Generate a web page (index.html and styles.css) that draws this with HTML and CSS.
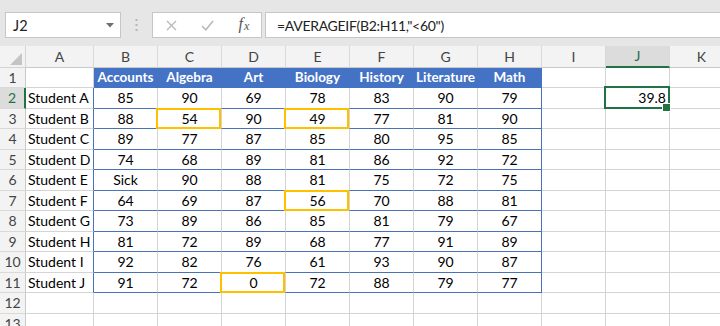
FILE: index.html
```html
<!DOCTYPE html>
<html>
<head>
<meta charset="utf-8">
<link rel="stylesheet" href="styles.css">
</head>
<body>
<div class="toolbar">
  <div class="namebox"><span>J2</span><svg class="caret" width="8" height="5" viewBox="0 0 8 5"><polygon points="0,0 8,0 4,4.5" fill="#6f6f6f"/></svg></div>
  <div class="grip"><svg width="3" height="12" viewBox="0 0 3 12"><rect x="0.5" y="0" width="2" height="2" fill="#b4b4b4"/><rect x="0.5" y="5" width="2" height="2" fill="#b4b4b4"/><rect x="0.5" y="10" width="2" height="2" fill="#b4b4b4"/></svg></div>
  <div class="fxbox">
    <span class="btn"><svg width="11" height="11" viewBox="0 0 11 11"><path d="M1 1 L10 10 M10 1 L1 10" stroke="#b9b9b9" stroke-width="1.3" fill="none"/></svg></span>
    <span class="btn"><svg width="13" height="11" viewBox="0 0 13 11"><path d="M1 6 L4.8 9.8 L12 1" stroke="#b9b9b9" stroke-width="1.6" fill="none"/></svg></span>
    <span class="btn fx">f<span class="sx">x</span></span>
  </div>
  <div class="formula">=AVERAGEIF(B2:H11,"&lt;60")</div>
</div>
<div class="sheet">
  <div class="corner"><svg width="14" height="14" viewBox="0 0 14 14"><polygon points="13,1 13,13 1,13" fill="#c4c4c4"/></svg></div>
  <div class="ch">A</div><div class="ch">B</div><div class="ch">C</div><div class="ch">D</div><div class="ch">E</div><div class="ch">F</div><div class="ch">G</div><div class="ch">H</div><div class="ch">I</div><div class="ch sel">J</div><div class="ch">K</div>

  <div class="rh">1</div><div class="c"></div><div class="c th">Accounts</div><div class="c th">Algebra</div><div class="c th">Art</div><div class="c th">Biology</div><div class="c th">History</div><div class="c th">Literature</div><div class="c th">Math</div><div class="c"></div><div class="c"></div><div class="c"></div>

  <div class="rh sel">2</div><div class="c nm tl">Student A</div><div class="c n tb">85</div><div class="c n tb">90</div><div class="c n tb">69</div><div class="c n tb">78</div><div class="c n tb">83</div><div class="c n tb">90</div><div class="c n tb tr">79</div><div class="c"></div><div class="c r act">39.8</div><div class="c"></div>

  <div class="rh">3</div><div class="c nm tl">Student B</div><div class="c n tb">88</div><div class="c n tb hl">54</div><div class="c n tb">90</div><div class="c n tb hl">49</div><div class="c n tb">77</div><div class="c n tb">81</div><div class="c n tb tr">90</div><div class="c"></div><div class="c"></div><div class="c"></div>

  <div class="rh">4</div><div class="c nm tl">Student C</div><div class="c n tb">89</div><div class="c n tb">77</div><div class="c n tb">87</div><div class="c n tb">85</div><div class="c n tb">80</div><div class="c n tb">95</div><div class="c n tb tr">85</div><div class="c"></div><div class="c"></div><div class="c"></div>

  <div class="rh">5</div><div class="c nm tl">Student D</div><div class="c n tb">74</div><div class="c n tb">68</div><div class="c n tb">89</div><div class="c n tb">81</div><div class="c n tb">86</div><div class="c n tb">92</div><div class="c n tb tr">72</div><div class="c"></div><div class="c"></div><div class="c"></div>

  <div class="rh">6</div><div class="c nm tl">Student E</div><div class="c n tb">Sick</div><div class="c n tb">90</div><div class="c n tb">88</div><div class="c n tb">81</div><div class="c n tb">75</div><div class="c n tb">72</div><div class="c n tb tr">75</div><div class="c"></div><div class="c"></div><div class="c"></div>

  <div class="rh">7</div><div class="c nm tl">Student F</div><div class="c n tb">64</div><div class="c n tb">69</div><div class="c n tb">87</div><div class="c n tb hl">56</div><div class="c n tb">70</div><div class="c n tb">88</div><div class="c n tb tr">81</div><div class="c"></div><div class="c"></div><div class="c"></div>

  <div class="rh">8</div><div class="c nm tl">Student G</div><div class="c n tb">73</div><div class="c n tb">89</div><div class="c n tb">86</div><div class="c n tb">85</div><div class="c n tb">81</div><div class="c n tb">79</div><div class="c n tb tr">67</div><div class="c"></div><div class="c"></div><div class="c"></div>

  <div class="rh">9</div><div class="c nm tl">Student H</div><div class="c n tb">81</div><div class="c n tb">72</div><div class="c n tb">89</div><div class="c n tb">68</div><div class="c n tb">77</div><div class="c n tb">91</div><div class="c n tb tr">89</div><div class="c"></div><div class="c"></div><div class="c"></div>

  <div class="rh">10</div><div class="c nm tl">Student I</div><div class="c n tb">92</div><div class="c n tb">82</div><div class="c n tb">76</div><div class="c n tb">61</div><div class="c n tb">93</div><div class="c n tb">90</div><div class="c n tb tr">87</div><div class="c"></div><div class="c"></div><div class="c"></div>

  <div class="rh">11</div><div class="c nm tl">Student J</div><div class="c n tb">91</div><div class="c n tb">72</div><div class="c n tb hl">0</div><div class="c n tb">72</div><div class="c n tb">88</div><div class="c n tb">79</div><div class="c n tb tr">77</div><div class="c"></div><div class="c"></div><div class="c"></div>

  <div class="rh">12</div><div class="c"></div><div class="c"></div><div class="c"></div><div class="c"></div><div class="c"></div><div class="c"></div><div class="c"></div><div class="c"></div><div class="c"></div><div class="c"></div><div class="c"></div>

  <div class="rh">13</div><div class="c"></div><div class="c"></div><div class="c"></div><div class="c"></div><div class="c"></div><div class="c"></div><div class="c"></div><div class="c"></div><div class="c"></div><div class="c"></div><div class="c"></div>
</div>
</body>
</html>
```
FILE: styles.css
```css
* { box-sizing: border-box; margin: 0; padding: 0; }
html, body { width: 720px; height: 326px; overflow: hidden; }
body { background: #fff; font-family: Lato, "Liberation Sans", sans-serif; color: #000; }

.toolbar {
  height: 46px;
  background: #e6e6e6;
  display: flex;
  align-items: flex-start;
  padding: 12px 0 0 5px;
}
.namebox {
  width: 116px;
  height: 26px;
  background: #fff;
  border: 1px solid #c6c6c6;
  display: flex;
  align-items: center;
  justify-content: space-between;
  padding: 0 6px 0 7px;
  font-size: 14.5px;
  color: #222;
}
.grip { width: 31px; height: 26px; display: flex; align-items: center; justify-content: center; }
.fxbox {
  width: 110px;
  height: 26px;
  background: #fff;
  border: 1px solid #c6c6c6;
  display: grid;
  grid-template-columns: 36px 37px 36px;
  align-items: center;
  justify-items: center;
}
.btn { display: flex; align-items: center; justify-content: center; }
.fx { font-family: "Liberation Serif", serif; font-style: italic; font-size: 16px; color: #555; padding-bottom: 2px; }
.fx .sx { font-size: 12px; position: relative; top: 2px; margin-left: 1px; }
.formula {
  flex: 1;
  margin-left: 3px;
  height: 26px;
  background: #fff;
  border: 1px solid #c6c6c6;
  border-right: none;
  padding-left: 11px;
  font-size: 14px;
  letter-spacing: -0.3px;
  color: #222;
  display: flex;
  align-items: center;
  white-space: nowrap;
}

.sheet {
  display: grid;
  grid-template-columns: 26px 68px repeat(10, 64px);
  grid-template-rows: 21.5px repeat(13, 20.5px);
}
.sheet > div {
  border-right: 1px solid #d4d4d4;
  border-bottom: 1px solid #d4d4d4;
  display: flex;
  align-items: center;
  white-space: nowrap;
  font-size: 14px;
  position: relative;
}
.corner { background: #f3f3f3; justify-content: flex-end; align-items: flex-end !important; padding: 0 2px 1px 0; }
.sheet > .ch { background: #f3f3f3; color: #444; font-size: 14px; justify-content: center; border-right-color: #d9d9d9; border-bottom-color: #c9c9c9; }
.sheet > .ch.sel { background: #dcdcdc; color: #2b6a47; border-bottom: 2px solid #217346; }
.sheet > .rh { background: #f3f3f3; color: #444; font-size: 14px; justify-content: center; border-right-color: #c9c9c9; border-bottom-color: #d9d9d9; }
.sheet > .rh.sel { background: #dcdcdc; color: #217346; border-right: 2px solid #217346; }

.c.nm { padding-left: 2px; }
.c.n { justify-content: center; }
.c.r { justify-content: flex-end; padding-right: 3px; }
.sheet > .th { background: #4472c4; border-color: #4472c4; color: #fff; font-weight: bold; font-size: 13.5px; justify-content: center; }
.sheet > .tb { border-bottom-color: #4a72b8; }
.sheet > .tl { border-right-color: #4a72b8; }
.sheet > .tr { border-right-color: #4a72b8; }

.hl::after {
  content: "";
  position: absolute;
  left: -2px; right: 0; top: -0.5px; bottom: -0.5px;
  border: 2px solid #ffc000;
  z-index: 2;
}
.act::after {
  content: "";
  position: absolute;
  left: -2px; right: -1px; top: -2px; bottom: -1px;
  border: 2px solid #217346;
  z-index: 2;
}
.act::before {
  content: "";
  position: absolute;
  width: 7px; height: 7px;
  right: -2px; bottom: -4px;
  background: #217346;
  border: 1px solid #fff;
  z-index: 3;
}
```
